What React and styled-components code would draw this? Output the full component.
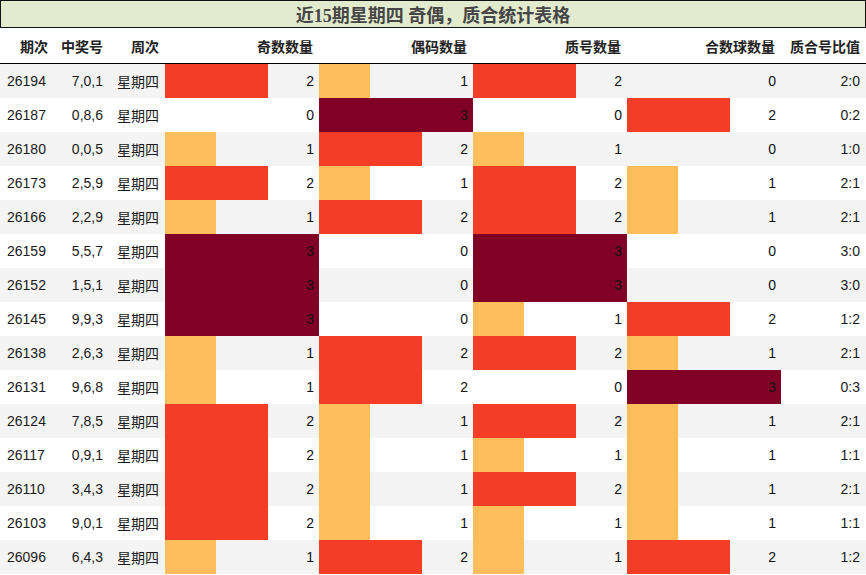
import React from "react";
import styled, { createGlobalStyle } from "styled-components";

const Global = createGlobalStyle`
  html, body { margin: 0; padding: 0; background: #fff; }
  body { font-family: "Liberation Sans", Arial, "Noto Sans CJK SC", sans-serif; }
`;

const rows = [
  ["26194", "7,0,1", 2, 1, 2, 0, "2:0"],
  ["26187", "0,8,6", 0, 3, 0, 2, "0:2"],
  ["26180", "0,0,5", 1, 2, 1, 0, "1:0"],
  ["26173", "2,5,9", 2, 1, 2, 1, "2:1"],
  ["26166", "2,2,9", 1, 2, 2, 1, "2:1"],
  ["26159", "5,5,7", 3, 0, 3, 0, "3:0"],
  ["26152", "1,5,1", 3, 0, 3, 0, "3:0"],
  ["26145", "9,9,3", 3, 0, 1, 2, "1:2"],
  ["26138", "2,6,3", 1, 2, 2, 1, "2:1"],
  ["26131", "9,6,8", 1, 2, 0, 3, "0:3"],
  ["26124", "7,8,5", 2, 1, 2, 1, "2:1"],
  ["26117", "0,9,1", 2, 1, 1, 1, "1:1"],
  ["26110", "3,4,3", 2, 1, 2, 1, "2:1"],
  ["26103", "9,0,1", 2, 1, 1, 1, "1:1"],
  ["26096", "6,4,3", 1, 2, 1, 2, "1:2"],
];

const barColors = { 1: "#fdbe5b", 2: "#f43d27", 3: "#800026" };

const Page = styled.div`
  width: 866px;
  height: 575px;
  overflow: hidden;
`;

const Title = styled.div`
  height: 26px;
  border: 1px solid #111;
  background: #e3ebcf;
  display: flex;
  align-items: center;
  justify-content: center;
  font-family: "Liberation Serif", "Noto Sans CJK SC", serif;
  font-weight: bold;
  font-size: 18px;
  color: #464646;
`;

const Grid = styled.div`
  display: grid;
  grid-template-columns: 54px 55px 56px 154px 154px 154px 154px 85px;
`;

const HeadCell = styled.div`
  height: 35px;
  border-bottom: 1px solid #000;
  display: flex;
  align-items: center;
  justify-content: flex-end;
  padding-right: 6px;
  font-weight: bold;
  font-size: 14px;
  color: #222;
  font-family: "Noto Sans CJK SC", sans-serif;
  white-space: nowrap;
`;

const Cell = styled.div`
  position: relative;
  height: 34px;
  display: flex;
  align-items: center;
  justify-content: ${(p) => (p.$left ? "flex-start" : "flex-end")};
  padding: ${(p) => (p.$left ? "0 0 0 7px" : p.$bar ? "0 5px 0 0" : "0 6px 0 0")};
  background: ${(p) => (p.$odd ? "#f4f4f4" : "#fff")};
  font-family: ${(p) => (p.$cjk ? '"Noto Sans CJK SC", sans-serif' : 'inherit')};
  font-size: 14px;
  color: #1a1a1a;
  white-space: nowrap;
`;

const Bar = styled.div`
  position: absolute;
  left: 0;
  top: 0;
  bottom: 0;
  background: ${(p) => barColors[p.$n] || "transparent"};
`;

const Num = styled.span`
  position: relative;
  color: #111;
`;

function BarCell({ n, odd }) {
  return (
    <Cell $odd={odd} $bar>
      {n > 0 && <Bar $n={n} style={{ width: `${(n / 3) * 154}px` }} />}
      <Num>{n}</Num>
    </Cell>
  );
}

export default function App() {
  const heads = ["期次", "中奖号", "周次", "奇数数量", "偶码数量", "质号数量", "合数球数量", "质合号比值"];
  return (
    <Page>
      <Global />
      <Title>近15期星期四 奇偶，质合统计表格</Title>
      <Grid>
        {heads.map((h) => (
          <HeadCell key={h}>{h}</HeadCell>
        ))}
        {rows.map((r, i) => {
          const odd = i % 2 === 0;
          return (
            <React.Fragment key={r[0]}>
              <Cell $odd={odd} $left>{r[0]}</Cell>
              <Cell $odd={odd}>{r[1]}</Cell>
              <Cell $odd={odd} $cjk>星期四</Cell>
              <BarCell n={r[2]} odd={odd} />
              <BarCell n={r[3]} odd={odd} />
              <BarCell n={r[4]} odd={odd} />
              <BarCell n={r[5]} odd={odd} />
              <Cell $odd={odd}>{r[6]}</Cell>
            </React.Fragment>
          );
        })}
      </Grid>
    </Page>
  );
}
